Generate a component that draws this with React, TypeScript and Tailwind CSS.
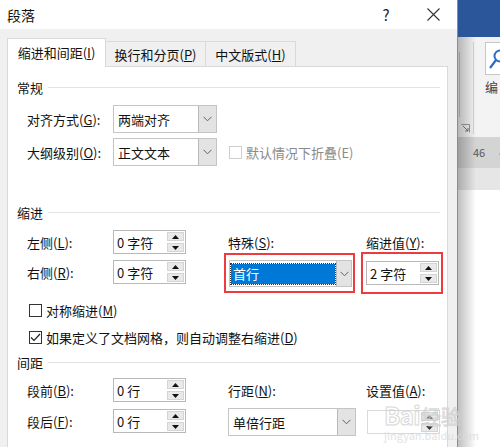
import React from "react";

function Up({ c = "#111" }: { c?: string }) {
  return (
    <svg width="7" height="4" viewBox="0 0 7 4">
      <path d="M3.5 0L7 4H0z" fill={c} />
    </svg>
  );
}
function Down({ c = "#111" }: { c?: string }) {
  return (
    <svg width="7" height="4" viewBox="0 0 7 4">
      <path d="M0 0H7L3.5 4z" fill={c} />
    </svg>
  );
}
function Chevron() {
  return (
    <svg width="9" height="6" viewBox="0 0 9 6">
      <polyline points="0.5,0.8 4.5,4.8 8.5,0.8" fill="none" stroke="#606060" strokeWidth="1" />
    </svg>
  );
}

function Spinner({ value, disabled }: { value: string; disabled?: boolean }) {
  return (
    <div
      className={
        disabled
          ? "flex h-[24px] w-[73px] border border-[#d9d9d9] bg-white"
          : "flex h-[24px] w-[73px] border border-[#b8b8b8] bg-white"
      }
    >
      <div className="flex flex-1 items-center pl-[3px] text-[13px] leading-none text-[#111]">{value}</div>
      <div className="flex w-[19px] flex-col gap-[2px] p-[1px]">
        <div className="flex flex-1 items-center justify-center border border-[#d4d4d4] bg-[#e9e9e9]">
          <Up c={disabled ? "#333" : "#111"} />
        </div>
        <div className="flex flex-1 items-center justify-center border border-[#d4d4d4] bg-[#e9e9e9]">
          <Down c={disabled ? "#333" : "#111"} />
        </div>
      </div>
    </div>
  );
}

function Select({ value, w }: { value: string; w: string }) {
  return (
    <div className={"flex h-[28px] border border-[#c4c4c4] bg-white " + w}>
      <div className="flex flex-1 items-center pl-[4px] text-[13px] leading-none text-[#111]">{value}</div>
      <div className="flex w-[18px] items-center justify-center border-l border-[#b9b9b9] bg-[#e3e3e3]">
        <Chevron />
      </div>
    </div>
  );
}

function CheckBox({ checked, disabled }: { checked?: boolean; disabled?: boolean }) {
  return (
    <div
      className={
        disabled
          ? "flex h-[13px] w-[13px] items-center justify-center border border-[#cfcfcf] bg-white"
          : "flex h-[13px] w-[13px] items-center justify-center border border-[#333] bg-white"
      }
    >
      {checked && (
        <svg width="11" height="9" viewBox="0 0 11 9">
          <polyline points="1,4.5 4,7.5 10,1" fill="none" stroke="#222" strokeWidth="1.2" />
        </svg>
      )}
    </div>
  );
}

function Header({ text }: { text: string }) {
  return (
    <div className="flex h-[20px] items-center pl-[9px] pr-[7px]">
      <span className="text-[13px] leading-none text-[#111]">{text}</span>
      <div className="ml-[5px] h-px flex-1 bg-[#e2e2e2]" />
    </div>
  );
}

function Label({ children, w = "w-[86px]" }: { children: React.ReactNode; w?: string }) {
  return (
    <div className={"flex h-[24px] shrink-0 items-center text-[13px] leading-none text-[#111] " + w}>{children}</div>
  );
}

export default function App() {
  return (
    <div className="relative flex h-[447px] w-[500px] overflow-hidden bg-white font-['Noto_Sans_CJK_SC','Microsoft_YaHei',sans-serif]">
      {/* Dialog */}
      <div className="flex w-[457px] shrink-0 flex-col">
        {/* Title bar */}
        <div className="flex h-[29px] shrink-0 items-center bg-white pl-[7px]">
          <span className="text-[14px] leading-none text-[#111]">段落</span>
          <div className="flex-1" />
          <div className="flex w-[46px] items-center justify-center text-[15px] leading-none text-[#222]">?</div>
          <div className="flex w-[48px] items-center justify-center">
            <svg width="13" height="13" viewBox="0 0 13 13">
              <path d="M0.5 0.5L12.5 12.5M12.5 0.5L0.5 12.5" stroke="#333" strokeWidth="1.1" />
            </svg>
          </div>
        </div>
        {/* Body */}
        <div className="flex flex-1 flex-col bg-[#f0f0f0] pl-[7px] pr-[9px] pt-[9px]">
          {/* Tabs */}
          <div className="relative z-10 -mb-px flex h-[29px] items-end">
            <div className="flex h-[29px] w-[99px] items-center justify-center border border-b-0 border-[#d9d9d9] bg-white pb-[1px] text-[13px] leading-none text-[#111]">
              缩进和间距(<u>I</u>)
            </div>
            <div className="flex h-[26px] w-[100px] items-center justify-center border border-l-0 border-[#d9d9d9] bg-[#f0f0f0] text-[13px] leading-none text-[#111]">
              换行和分页(<u>P</u>)
            </div>
            <div className="flex h-[26px] w-[90px] items-center justify-center border border-l-0 border-[#d9d9d9] bg-[#f0f0f0] text-[13px] leading-none text-[#111]">
              中文版式(<u>H</u>)
            </div>
          </div>
          {/* Panel */}
          <div className="flex flex-1 flex-col border border-[#d9d9d9] bg-white pt-[10px]">
            <Header text="常规" />
            <div className="mt-[8px] flex items-center pl-[19px]">
              <Label>
                对齐方式(<u>G</u>):
              </Label>
              <Select value="两端对齐" w="w-[104px]" />
            </div>
            <div className="mt-[5px] flex items-center pl-[19px]">
              <Label>
                大纲级别(<u>O</u>):
              </Label>
              <Select value="正文文本" w="w-[104px]" />
              <div className="ml-[12px] flex items-center gap-[4px]">
                <CheckBox disabled />
                <span className="text-[13px] leading-none text-[#8a8a8a]">默认情况下折叠(E)</span>
              </div>
            </div>

            <div className="mt-[36px]">
              <Header text="缩进" />
            </div>
            <div className="mt-[8px] flex pl-[19px]">
              <div className="flex w-[201px] shrink-0 flex-col gap-[6px]">
                <div className="flex">
                  <Label>
                    左侧(<u>L</u>):
                  </Label>
                  <Spinner value="0 字符" />
                </div>
                <div className="flex">
                  <Label>
                    右侧(<u>R</u>):
                  </Label>
                  <Spinner value="0 字符" />
                </div>
              </div>
              <div className="flex w-[138px] shrink-0 flex-col">
                <Label w="w-auto">
                  特殊(<u>S</u>):
                </Label>
                <div className="relative ml-[1px] mt-[6px] flex h-[27px] w-[123px] border border-[#c4c4c4] bg-white">
                  <div className="flex flex-1 items-center p-[1px]">
                    <div className="flex h-[20px] w-full items-center bg-[#0078d7] pl-[2px] text-[13px] leading-none text-white outline-1 outline-dotted outline-[#333]">
                      首行
                    </div>
                  </div>
                  <div className="flex w-[15px] items-center justify-center border-l border-[#b9b9b9] bg-[#e3e3e3]">
                    <Chevron />
                  </div>
                  <div className="pointer-events-none absolute -bottom-[7px] -left-[6px] -right-[4px] -top-[8px] border-2 border-[#ee3b3f]" />
                </div>
              </div>
              <div className="flex flex-col">
                <Label w="w-auto">
                  缩进值(<u>Y</u>):
                </Label>
                <div className="relative mt-[7px]">
                  <Spinner value="2 字符" />
                  <div className="pointer-events-none absolute -bottom-[9px] -left-[5px] -right-[4px] -top-[9px] border-2 border-[#ee3b3f]" />
                </div>
              </div>
            </div>

            <div className="mt-[13px] flex h-[20px] items-center gap-[4px] pl-[21px]">
              <CheckBox />
              <span className="text-[13px] leading-none text-[#111]">
                对称缩进(<u>M</u>)
              </span>
            </div>
            <div className="mt-[7px] flex h-[20px] items-center gap-[4px] pl-[21px]">
              <CheckBox checked />
              <span className="text-[13px] leading-none text-[#111]">
                如果定义了文档网格，则自动调整右缩进(<u>D</u>)
              </span>
            </div>

            <div className="mt-[5px]">
              <Header text="间距" />
            </div>
            <div className="mt-[6px] flex pl-[19px]">
              <div className="flex w-[201px] shrink-0 flex-col gap-[7px]">
                <div className="flex">
                  <Label>
                    段前(<u>B</u>):
                  </Label>
                  <Spinner value="0 行" />
                </div>
                <div className="flex">
                  <Label>
                    段后(<u>F</u>):
                  </Label>
                  <Spinner value="0 行" />
                </div>
              </div>
              <div className="flex w-[138px] shrink-0 flex-col">
                <Label w="w-auto">
                  行距(<u>N</u>):
                </Label>
                <div className="mt-[6px]">
                  <Select value="单倍行距" w="w-[128px]" />
                </div>
              </div>
              <div className="flex flex-col">
                <Label w="w-auto">
                  设置值(<u>A</u>):
                </Label>
                <div className="ml-[1px] mt-[8px]">
                  <Spinner value="" disabled />
                </div>
              </div>
            </div>
            <div className="mt-[9px] flex h-[20px] items-center gap-[4px] pl-[21px]">
              <CheckBox />
              <span className="text-[13px] leading-none text-[#111]">
                在相同样式的段落间不添加空格(<u>C</u>)
              </span>
            </div>
          </div>
        </div>
      </div>

      {/* Background Word window */}
      <div className="relative flex flex-1 flex-col border-l border-[#8c8c8c]">
        <div className="h-[37px] shrink-0 bg-[#2b579a]" />
        <div className="relative flex h-[100px] shrink-0 bg-[#f3f3f3] pt-[5px]">
          <div className="ml-[1px] mt-[10px] h-[65px] w-px bg-[#c8c8c8]" />
          <div className="ml-[13px] h-[92px] w-px bg-[#d2d2d2]" />
          <div className="ml-[11px] flex flex-col">
            <div className="h-[33px] w-[20px] border border-[#c6c6c6] bg-white">
              <svg width="20" height="33" viewBox="0 0 20 33">
                <circle cx="14" cy="13" r="5.5" fill="none" stroke="#2b6cc4" strokeWidth="2" />
                <path d="M10 17L4 25" stroke="#2b6cc4" strokeWidth="2.2" />
              </svg>
            </div>
            <span className="mt-[5px] text-[13px] leading-none text-[#444]">编</span>
          </div>
          <div className="absolute left-[3px] top-[87px]">
            <svg width="9" height="9" viewBox="0 0 9 9">
              <path d="M0.5 0.5H8.5V8.5" fill="none" stroke="#9a9a9a" />
              <path d="M2 2L7 7M7 4V7H4" fill="none" stroke="#777" />
            </svg>
          </div>
        </div>
        <div className="flex h-[31px] shrink-0 items-center gap-[14px] bg-[#d4d4d4] pl-[15px] text-[11px] leading-none text-[#555]">
          <span>46</span>
          <span>4</span>
        </div>
        <div className="h-[22px] shrink-0 bg-[#e6e6e6]" />
        <div className="flex-1 bg-white" />
        <div className="pointer-events-none absolute bottom-0 left-0 top-[37px] w-[18px] bg-gradient-to-r from-[#00000040] to-transparent" />
      </div>

      {/* Watermark */}
      <div className="pointer-events-none absolute left-[384px] top-[403px] flex flex-col leading-none text-[#d4d4d4] opacity-80">
        <div className="flex items-end gap-[1px]">
          <span className="text-[24px] font-bold tracking-tight text-transparent [-webkit-text-stroke:1px_#cfcfcf]">Bai</span>
          <span className="text-[20px] text-transparent [-webkit-text-stroke:1px_#cfcfcf]">经验</span>
        </div>
        <span className="mt-[3px] text-[11px] text-[#dcdcdc]">jingyan.baidu.com</span>
      </div>
    </div>
  );
}
